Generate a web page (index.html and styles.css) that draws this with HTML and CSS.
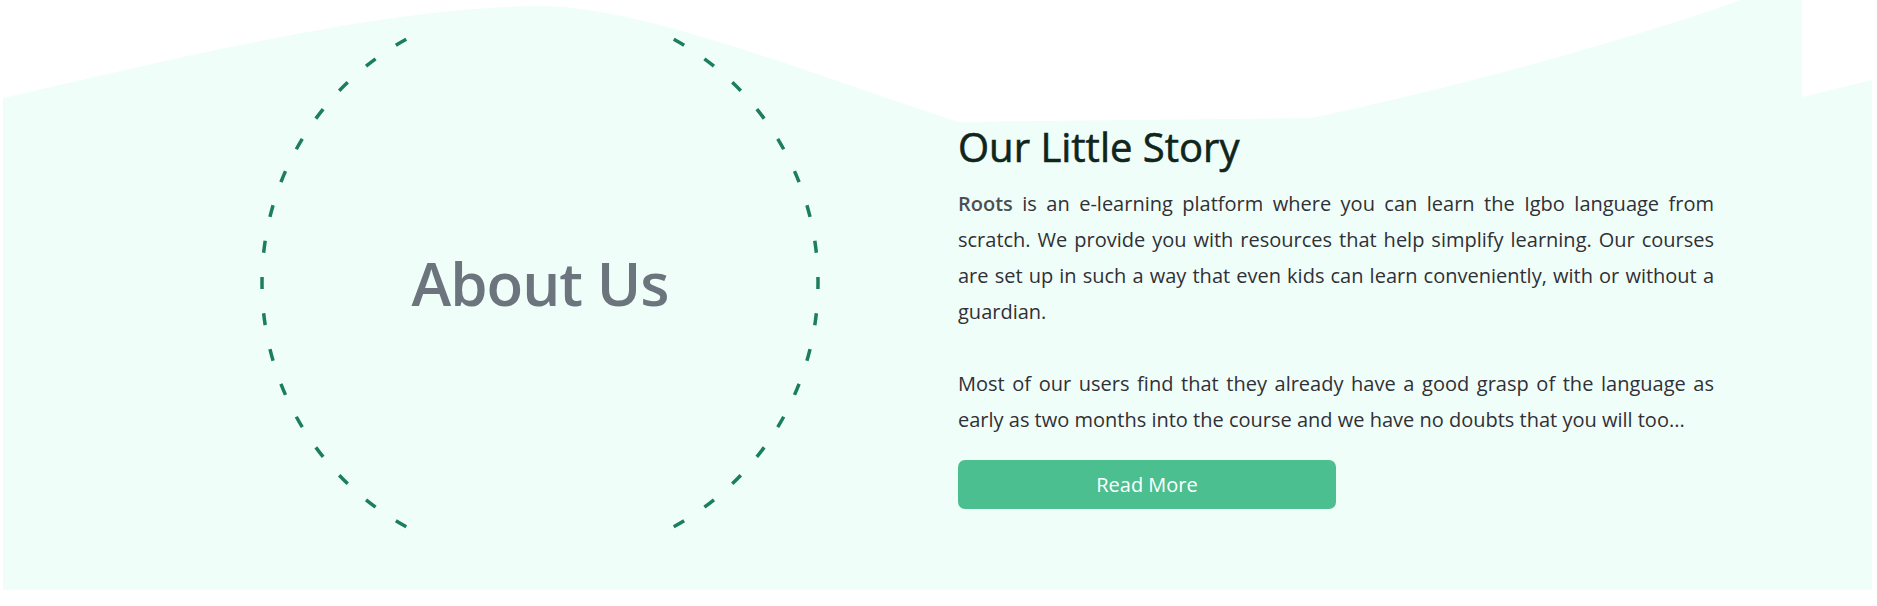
FILE: index.html
```html
<!DOCTYPE html>
<html lang="en">
<head>
<meta charset="utf-8">
<title>About Us</title>
<link rel="stylesheet" href="styles.css">
</head>
<body>
<section class="about">
  <svg class="about-wave" viewBox="3 0 1869 590" preserveAspectRatio="none" aria-hidden="true">
    <path d="M3 98 C150 65 380 6 540 6 C640 6 800 70 958 122 L1311 118 C1420 95 1600 50 1741 0 L1802 0 L1802 97 L1872 80 L1872 590 L3 590 Z"/>
  </svg>
  <div class="about-row">
    <div class="about-badge">
      <svg class="about-ring" viewBox="0 0 560 498" aria-hidden="true">
        <circle cx="280" cy="249" r="278" pathLength="480"/>
      </svg>
      <h1 class="about-title">About Us</h1>
    </div>
    <div class="about-story">
      <h2 class="story-title">Our Little Story</h2>
      <p class="story-text"><strong class="brand">Roots</strong> is an e-learning platform where you can learn the Igbo language from scratch. We provide you with resources that help simplify learning. Our courses are set up in such a way that even kids can learn conveniently, with or without a guardian.</p>
      <p class="story-text">Most of our users find that they already have a good grasp of the language as early as two months into the course and we have no doubts that you will too...</p>
      <a class="story-button" href="#">Read More</a>
    </div>
  </div>
</section>
</body>
</html>
```
FILE: styles.css
```css
html, body {
  margin: 0;
  padding: 0;
  background: #ffffff;
}

body {
  font-family: "Open Sans", "Noto Sans", sans-serif;
}

.about {
  position: relative;
  margin: 0 5px 16px 3px;
  height: 590px;
}

.about-wave {
  position: absolute;
  inset: 0;
  width: 100%;
  height: 100%;
  z-index: 0;
}

.about-wave path {
  fill: #f0fef9;
}

.about-row {
  position: relative;
  z-index: 1;
  display: flex;
  align-items: flex-start;
  gap: 138px;
  padding-left: 257px;
}

.about-badge {
  position: relative;
  flex: 0 0 560px;
  height: 498px;
  margin-top: 34px;
  display: flex;
  align-items: center;
  justify-content: center;
}

.about-ring {
  position: absolute;
  inset: 0;
  width: 560px;
  height: 498px;
  overflow: hidden;
}

.about-ring circle {
  fill: none;
  stroke: #1a7f5a;
  stroke-width: 3.5;
  stroke-dasharray: 3.3 6.7;
  stroke-dashoffset: 1.65;
}

.about-title {
  position: relative;
  margin: 0;
  font-size: 60px;
  font-weight: 600;
  letter-spacing: -1px;
  line-height: 1;
  color: #6c757d;
}

.about-story {
  flex: 0 0 756px;
  padding-top: 120px;
}

.story-title {
  margin: 0 0 12px;
  font-size: 40px;
  font-weight: 400;
  line-height: 54px;
  color: #10251b;
  -webkit-text-stroke: 0.6px #10251b;
}

.story-text {
  margin: 0 0 36px;
  font-size: 20px;
  line-height: 36px;
  text-align: justify;
  color: #303036;
}

.story-text:last-of-type {
  margin-bottom: 22px;
}

.brand {
  font-weight: 600;
  color: #4a4f55;
}

.story-button {
  display: flex;
  align-items: center;
  justify-content: center;
  width: 378px;
  height: 49px;
  border-radius: 7px;
  background: #4bbf8f;
  color: #ffffff;
  font-size: 20px;
  text-decoration: none;
}
```
